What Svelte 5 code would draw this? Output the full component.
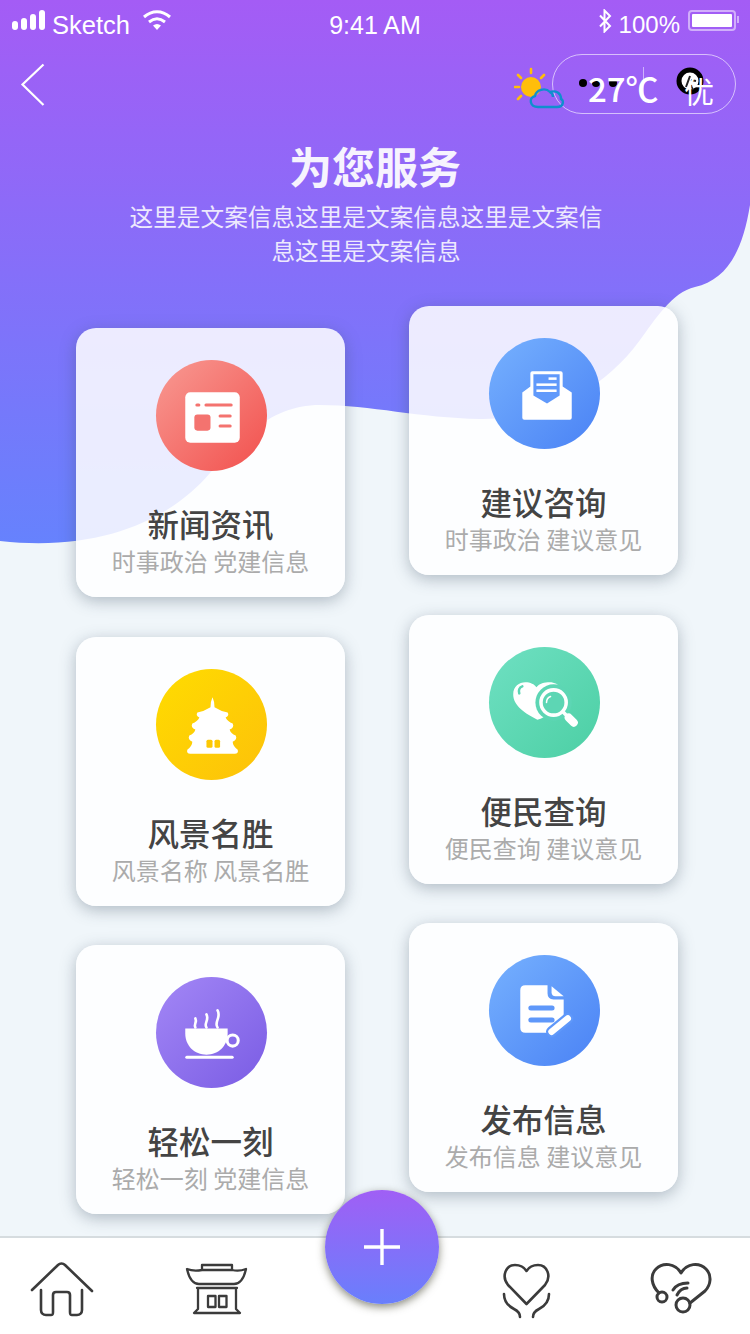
<script>
  const left = [
    { title: '新闻资讯', sub: '时事政治 党建信息', icon: 'news', tone: 'red' },
    { title: '风景名胜', sub: '风景名称 风景名胜', icon: 'temple', tone: 'yellow' },
    { title: '轻松一刻', sub: '轻松一刻 党建信息', icon: 'cup', tone: 'purple' }
  ];
  const right = [
    { title: '建议咨询', sub: '时事政治 建议意见', icon: 'mail', tone: 'blue' },
    { title: '便民查询', sub: '便民查询 建议意见', icon: 'search', tone: 'green' },
    { title: '发布信息', sub: '发布信息 建议意见', icon: 'doc', tone: 'blue' }
  ];
  const columns = [
    { name: 'col-left', cards: left },
    { name: 'col-right', cards: right }
  ];
</script>

{#snippet cardIcon(name)}
  <svg class="glyph" viewBox="0 0 110 110" aria-hidden="true">
    {#if name === 'news'}
      <rect x="29" y="32" width="54" height="50" rx="5" fill="#fff" />
      <rect x="39" y="43" width="5" height="3" rx="1.5" fill="#f4736f" />
      <rect x="48" y="43" width="28" height="3" rx="1.5" fill="#f4736f" />
      <rect x="38" y="54" width="16" height="16" rx="3" fill="#f4736f" />
      <rect x="62" y="54" width="13" height="3" rx="1.5" fill="#f4736f" />
      <rect x="62" y="64" width="13" height="3" rx="1.5" fill="#f4736f" />
    {:else if name === 'temple'}
      <path fill="#fff" d="M56 28Q58 32 58 38Q64 42 71 43Q73 46 69 48Q71 52 76 54Q78 58 73 60Q74 64 79 66Q81 70 76 72Q76 76 81 80Q82 84 78 84H34Q30 84 31 80Q36 76 36 72Q31 70 33 66Q38 64 39 60Q34 58 36 54Q41 52 43 48Q39 46 41 43Q48 42 54 38Q54 32 56 28Z" />
      <rect x="50" y="70" width="6" height="8" rx="1.5" fill="#fdc803" />
      <rect x="58" y="70" width="5.500" height="8" rx="1.5" fill="#fdc803" />
    {:else if name === 'cup'}
      <path fill="#fff" d="M29 51H71V56C71 68 62 77 50 77C38 77 29 68 29 56Z" />
      <circle cx="76" cy="63" r="5.500" fill="none" stroke="#fff" stroke-width="3" />
      <rect x="29" y="78" width="48" height="3" rx="1.500" fill="#fff" />
      <g fill="none" stroke="#fff" stroke-width="2.600" stroke-linecap="round">
        <path d="M39 50c-2-3 2-5 0-9" />
        <path d="M50 50c-3-4 3-7 0-13" />
        <path d="M61 50c-4-5 4-10 0-17" />
      </g>
    {:else if name === 'mail'}
      <path fill="#fff" d="M33 54L41 48V35q0-2 2-2H71q2 0 2 2V48L82 54V79q0 2-2 2H35q-2 0-2-2Z" />
      <path fill="#6099fb" d="M44 36H70V57L57.500 65L44 57Z" />
      <rect x="59" y="39" width="8" height="2.500" fill="#fff" />
      <rect x="47" y="45" width="20" height="2.500" fill="#fff" />
      <rect x="47" y="51" width="20" height="2.500" fill="#fff" />
    {:else if name === 'search'}
      <path fill="#fff" d="M47 40C50 36 55 35 60 35C70 35 76 44 72 54C68 62 56 70 48 72C36 66 24 58 24 47C24 39 30 35 36 35C41 35 45 37 47 40Z" />
      <circle cx="64" cy="55" r="18" fill="#5dd6b4" />
      <circle cx="64" cy="55" r="12.500" fill="none" stroke="#fff" stroke-width="3.500" />
      <path d="M73 64L79 70" stroke="#fff" stroke-width="3.500" />
      <path d="M79 70L84 75" stroke="#fff" stroke-width="8" stroke-linecap="round" />
      <path d="M57 55c0-3 1.500-5 4-6" fill="none" stroke="#fff" stroke-width="1.500" stroke-linecap="round" />
      <path d="M33 39c-3 1-4 4-3 7" fill="none" stroke="#5dd6b4" stroke-width="2.500" stroke-linecap="round" />
    {:else if name === 'doc'}
      <path fill="#fff" d="M36 30H58V38q0 6 6 6H74V60L58 77H36q-5 0-5-5V35q0-5 5-5Z" />
      <path fill="#fff" d="M62 31L74 41H66q-4 0-4-4Z" />
      <rect x="39" y="50" width="26" height="5" rx="2.500" fill="#5f98fa" />
      <rect x="39" y="62" width="26" height="5" rx="2.500" fill="#5f98fa" />
      <path d="M62 76L78 63" stroke="#5f98fa" stroke-width="11" stroke-linecap="round" />
      <path d="M62 76L78 63" stroke="#fff" stroke-width="6.500" stroke-linecap="round" />
    {/if}
  </svg>
{/snippet}

<div class="page">
  <svg class="wave" viewBox="0 0 750 560" preserveAspectRatio="none" aria-hidden="true">
    <defs>
      <linearGradient id="waveFill" x1="0" y1="0" x2="0" y2="1">
        <stop offset="0" stop-color="#a45cf5" />
        <stop offset="1" stop-color="#6682fd" />
      </linearGradient>
    </defs>
    <path fill="url(#waveFill)" d="M0 0H750V205C742 255 725 280 695 287C672 292 655 320 640 340C600 395 540 420 480 419C420 418 370 405 320 405C270 405 240 440 210 473C170 520 100 552 0 541Z" />
  </svg>

  <div class="status">
    <div class="status-side">
      <span class="signal"><i></i><i></i><i></i><i></i></span>
      <span class="carrier">Sketch</span>
      <svg class="wifi" viewBox="0 0 30 20" aria-hidden="true">
        <path d="M2 7C10 0 20 0 28 7M7 12c5-4 11-4 16 0" fill="none" stroke="#fff" stroke-width="3" />
        <path d="M11 15.500c2.500-2 5.500-2 8 0L15 20z" fill="#fff" />
      </svg>
    </div>
    <span class="clock">9:41 AM</span>
    <div class="status-side end">
      <svg class="bt" viewBox="0 0 14 24" aria-hidden="true">
        <path d="M2 6.500L12 17l-5.500 5.500V1.500L12 7 2 17.500" fill="none" stroke="#fff" stroke-width="2" />
      </svg>
      <span>100%</span>
      <span class="battery"><b></b></span>
    </div>
  </div>

  <div class="nav">
    <svg class="back" viewBox="0 0 26 44" aria-hidden="true">
      <path d="M23.500 1.500L2.500 21.500l21 20.500" fill="none" stroke="#fff" stroke-width="2.200" />
    </svg>
    <svg class="weather" viewBox="0 0 52 44" aria-hidden="true">
      <circle cx="17" cy="20" r="10" fill="#ffbe0b" />
      <g stroke="#ffbe0b" stroke-width="2.600" stroke-linecap="round">
        <path d="M17 2v4M4 8l3 3M1 20h4M30 8l-3 3M4 32l3-3" />
      </g>
      <path d="M24 40c-8 0-10-9-3-11 1-6 10-9 15-4 6-2 11 1 11 7 3 1 3 8-4 8z" fill="none" stroke="#0f8fce" stroke-width="2.400" />
      <path d="M36 25c2 1 3 3 3 5" fill="none" stroke="#0f8fce" stroke-width="2.400" />
    </svg>
    <div class="pill">
      <span class="dots"><i></i><i></i><i></i></span>
      <span class="temp">27℃</span>
      <span class="rule"></span>
      <span class="aqi">
        <svg class="blob" viewBox="0 0 28 28" aria-hidden="true">
          <circle cx="14" cy="14" r="11" fill="#fff" stroke="#000" stroke-width="5" />
          <path d="M10 20L14 9M15 13l5 1M15 18l2 5" fill="none" stroke="#222" stroke-width="2" />
        </svg>
        <span class="aqi-text">优</span>
      </span>
    </div>
  </div>

  <header class="intro">
    <h1>为您服务</h1>
    <p>这里是文案信息这里是文案信息这里是文案信息这里是文案信息</p>
  </header>

  <main class="grid">
    {#each columns as col}
      <div class="col {col.name}">
        {#each col.cards as card}
          <article class="card">
            <div class="disc {card.tone}">{@render cardIcon(card.icon)}</div>
            <h2>{card.title}</h2>
            <p>{card.sub}</p>
          </article>
        {/each}
      </div>
    {/each}
  </main>

  <nav class="tabs">
    <svg viewBox="0 0 62 56" class="tab tab-home" aria-hidden="true">
      <path d="M1 28L27 3c2-2 5-2 7 0L61 29M10 28V48c0 3 2 5 5 5h5c2 0 2-1 2-3V33c0-2 1-3 3-3h11c2 0 3 1 3 3V50c0 2 0 3 2 3h5c3 0 5-2 5-5V28" />
    </svg>
    <svg viewBox="0 0 61 52" class="tab tab-hall" aria-hidden="true">
      <path d="M1 5C6 7 10 7 16 6V1H46V6C50 7 55 7 60 5C58 14 54 20 48 20H13C7 20 3 14 1 5ZM16 6H46" />
      <path d="M11 24H51M12 24V45L8 49H54L50 45V24" />
      <rect x="22" y="32" width="7.500" height="11" />
      <rect x="33" y="32" width="7.500" height="11" />
    </svg>
    <button class="fab" type="button" aria-label="add">
      <svg viewBox="0 0 38 38" aria-hidden="true"><path d="M19 1v36M1 19h36" stroke="#fff" stroke-width="3.400" /></svg>
    </button>
    <svg viewBox="0 0 50 56" class="tab tab-care" aria-hidden="true">
      <path d="M24.500 42L6 23C-1 14 4 3 13 3C18 3 22 5 24.500 9C27 5 31 3 36 3C45 3 50 14 43 23Z" />
      <path d="M2 32c0 8 4 12 10 15 4 2 6 4 6 8M47 32c0 8-4 12-10 15-4 2-6 4-6 8" />
    </svg>
    <svg viewBox="0 0 60 50" class="tab tab-heart" aria-hidden="true">
      <path d="M8 30C0 22-1 12 5 6C12-1 24 0 30 10C36 0 48-1 55 6C61 12 60 22 54 28L39 40" />
      <circle cx="11" cy="34" r="5" />
      <circle cx="32" cy="42" r="7" />
      <path d="M22 27C25 22 31 20 37 20M26 32C28 28 32 25 36 25" />
    </svg>
  </nav>
</div>

<style>
  :global(body) {
    margin: 0;
    background: #f0f6fa;
  }
  .page {
    position: relative;
    width: 750px;
    height: 1334px;
    overflow: hidden;
    display: flex;
    flex-direction: column;
    background: #f0f6fa;
    font-family: "Noto Sans CJK SC", "Liberation Sans", sans-serif;
  }
  .wave {
    position: absolute;
    left: 0;
    top: 0;
    width: 750px;
    height: 560px;
  }
  .status, .nav, .intro, .grid {
    position: relative;
  }
  .status {
    height: 50px;
    padding: 0 12px;
    display: flex;
    align-items: center;
    justify-content: space-between;
    color: #fff;
    font: 24px "Liberation Sans", sans-serif;
  }
  .status-side {
    width: 260px;
    display: flex;
    align-items: center;
  }
  .status-side.end {
    justify-content: flex-end;
    padding-right: 2px;
    box-sizing: border-box;
  }
  .signal {
    display: flex;
    align-items: flex-end;
    gap: 3px;
    margin: -10px 7px 0 0;
  }
  .signal i {
    width: 6px;
    border-radius: 3px;
    background: #fff;
  }
  .signal i:nth-child(1) { height: 9px; }
  .signal i:nth-child(2) { height: 12px; }
  .signal i:nth-child(3) { height: 16px; }
  .signal i:nth-child(4) { height: 20px; }
  .carrier {
    font-size: 25.5px;
  }
  .wifi {
    width: 30px;
    height: 20px;
    margin: -10px 0 0 12px;
  }
  .clock {
    font-size: 25px;
  }
  .bt {
    width: 14px;
    height: 24px;
    margin: -8px 7px 0 0;
  }
  .battery {
    position: relative;
    width: 48px;
    height: 21px;
    margin: -9px 0 0 8px;
    border: 2px solid rgba(255, 255, 255, 0.5);
    border-radius: 4px;
    padding: 2px;
    box-sizing: border-box;
    display: flex;
  }
  .battery::after {
    content: "";
    position: absolute;
    right: -5px;
    top: 4px;
    width: 2px;
    height: 7px;
    background: rgba(255, 255, 255, 0.5);
  }
  .battery b {
    flex: 1;
    background: #fff;
    border-radius: 1px;
  }
  .nav {
    height: 68px;
    display: flex;
    align-items: center;
    padding: 0 14px 0 20px;
  }
  .back {
    width: 26px;
    height: 44px;
    margin: 2px auto 0 0;
  }
  .weather {
    width: 52px;
    height: 44px;
    margin: 10px -14px 0 0;
    position: relative;
    z-index: 1;
  }
  .pill {
    position: relative;
    width: 184px;
    height: 60px;
    box-sizing: border-box;
    border: 1.5px solid rgba(255, 255, 255, 0.6);
    border-radius: 30px;
    color: #fff;
    font: 32px "Noto Sans CJK SC", sans-serif;
  }
  .temp {
    position: absolute;
    left: 35px;
    top: 8px;
    line-height: 50px;
    font-size: 33px;
    font-weight: 500;
    white-space: nowrap;
  }
  .dots {
    position: absolute;
    left: 26px;
    top: 24px;
    display: flex;
    gap: 5px;
  }
  .dots i {
    width: 8px;
    height: 8px;
    border-radius: 50%;
    background: #000;
  }
  .dots i:last-child {
    margin-left: 4px;
  }
  .rule {
    position: absolute;
    left: 90px;
    top: 12px;
    width: 1px;
    height: 34px;
    background: rgba(255, 255, 255, 0.5);
  }
  .aqi {
    position: absolute;
    left: 122px;
    top: 12px;
    width: 44px;
    height: 44px;
  }
  .blob {
    position: absolute;
    left: 1px;
    top: 0;
    width: 28px;
    height: 28px;
  }
  .aqi-text {
    position: absolute;
    left: 9px;
    top: 0;
    line-height: 46px;
    font-size: 30px;
  }
  .intro {
    margin-top: 16px;
    color: #fff;
  }
  .intro h1 {
    margin: 0;
    text-align: center;
    font-size: 43px;
    line-height: 62px;
    font-weight: 700;
    opacity: 0.92;
  }
  .intro p {
    width: 476px;
    margin: 3px 0 0 128px;
    text-align: center;
    font-size: 23.65px;
    line-height: 34px;
    opacity: 0.85;
  }
  .grid {
    flex: 1;
    display: flex;
    justify-content: center;
    gap: 64px;
    margin-left: 4px;
  }
  .col {
    display: flex;
    flex-direction: column;
    gap: 40px;
  }
  .col-left { padding-top: 61px; }
  .col-right { padding-top: 39px; }
  .card {
    width: 269px;
    height: 269px;
    box-sizing: border-box;
    padding-top: 32px;
    border-radius: 20px;
    text-align: center;
    background: rgba(255, 255, 255, 0.86);
    box-shadow: 0 4px 16px rgba(60, 80, 100, 0.36);
  }
  .card:last-child {
    margin-top: -1px;
  }
  .disc {
    width: 111px;
    height: 111px;
    margin: 0 0 0 80px;
    border-radius: 50%;
  }
  .glyph {
    display: block;
    width: 111px;
    height: 111px;
  }
  .red { background: linear-gradient(135deg, #f89a93, #f2504d); }
  .yellow { background: linear-gradient(135deg, #ffdc00, #fdc10a); }
  .purple { background: linear-gradient(135deg, #a387f6, #7a5ce4); }
  .blue { background: linear-gradient(135deg, #76b1fe, #4a82f5); }
  .green { background: linear-gradient(135deg, #6fe0c2, #4ccfa4); }
  .card h2 {
    margin: 28px 0 0;
    font-size: 31.5px;
    line-height: 48px;
    font-weight: 500;
    color: #444;
  }
  .card p {
    margin: -1px 0 0;
    font-size: 24px;
    line-height: 30px;
    color: #ababab;
  }
  .tabs {
    position: absolute;
    left: 0;
    right: 0;
    bottom: 0;
    height: 98px;
    box-sizing: border-box;
    border-top: 2px solid #d6dcdf;
    background: #fff;
  }
  .tab {
    position: absolute;
    fill: none;
    stroke: #3b3b3b;
    stroke-width: 2.6;
    stroke-linejoin: round;
    stroke-linecap: round;
    overflow: visible;
  }
  .tab-home { left: 31px; top: 24px; width: 62px; height: 56px; }
  .tab-hall { left: 186px; top: 26px; width: 61px; height: 52px; stroke-width: 2.3; }
  .tab-care { left: 502px; top: 24px; width: 50px; height: 56px; }
  .tab-heart { left: 651px; top: 25px; width: 60px; height: 50px; stroke-width: 3; }
  .fab {
    position: absolute;
    left: 325px;
    top: -48px;
    width: 114px;
    height: 114px;
    padding: 0;
    border: 0;
    border-radius: 50%;
    background: linear-gradient(180deg, #a05ff5, #697ffc);
    box-shadow: 0 3px 8px rgba(60, 60, 40, 0.6);
    display: flex;
    align-items: center;
    justify-content: center;
  }
  .fab svg {
    width: 38px;
    height: 38px;
  }
</style>
